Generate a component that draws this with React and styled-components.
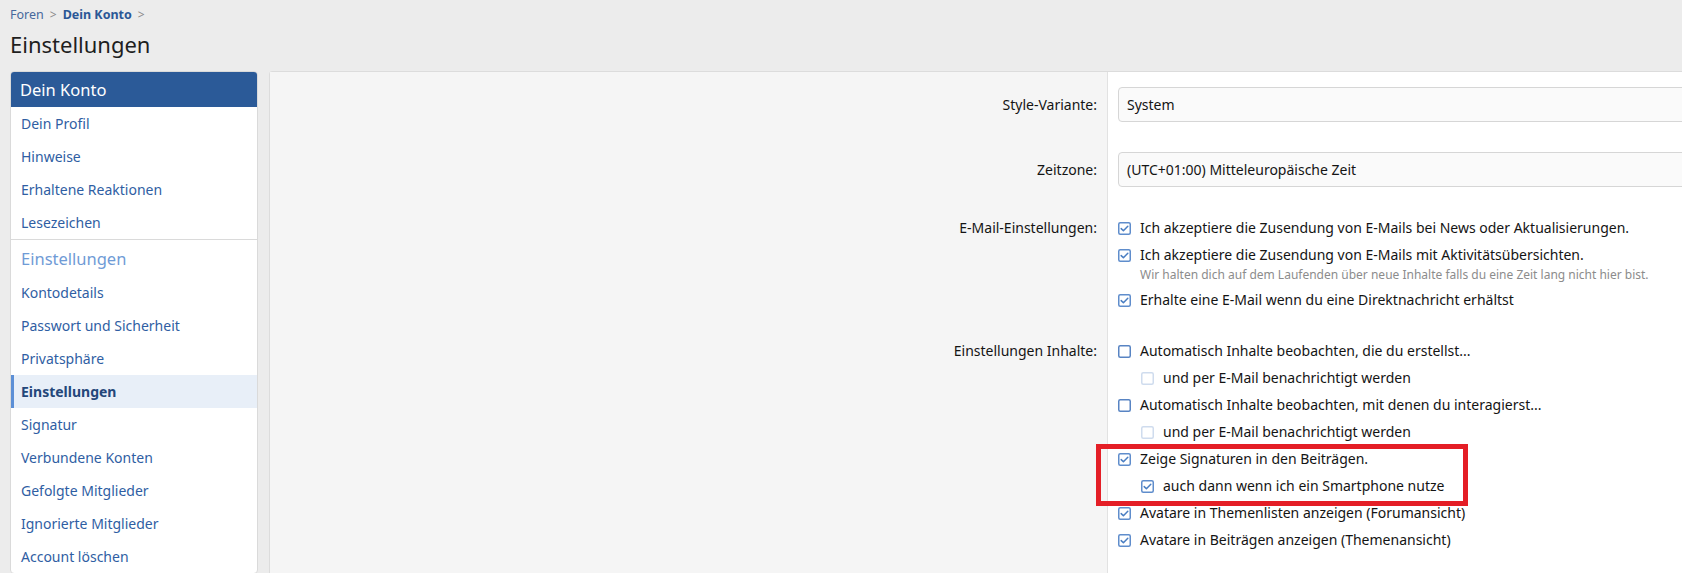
import React from "react";
import styled, { createGlobalStyle } from "styled-components";

const FONT = `"Noto Sans", "Open Sans", Arial, sans-serif`;

const GlobalStyle = createGlobalStyle`
  html, body { margin: 0; padding: 0; overflow: hidden; }
  body {
    background: #ececec;
    font-family: ${FONT};
    color: #141414;
  }
  *, *::before, *::after { box-sizing: border-box; }
`;

const Page = styled.div`
  width: 1900px;
  padding: 0 10px;
`;

const Breadcrumb = styled.nav`
  display: flex;
  align-items: center;
  gap: 6px;
  height: 26px;
  padding-top: 2px;
  font-size: 12.5px;
`;

const Crumb = styled.a`
  color: ${(p) => (p.$current ? "#2b5796" : "#47689c")};
  font-weight: ${(p) => (p.$current ? 700 : 400)};
  text-decoration: none;
`;

const Sep = styled.span`
  color: #8a8a8a;
  font-size: 12px;
`;

const Title = styled.h1`
  margin: 0;
  height: 45px;
  line-height: 36px;
  font-size: 22px;
  font-weight: 400;
  color: #1e1e1e;
`;

const Columns = styled.div`
  display: flex;
  align-items: flex-start;
  gap: 11px;
`;

const Sidebar = styled.aside`
  width: 248px;
  flex: none;
  background: #fff;
  border: 1px solid #dadada;
  border-radius: 4px;
  overflow: hidden;
`;

const SideHeader = styled.div`
  height: 36px;
  padding: 0 10px;
  display: flex;
  align-items: center;
  background: #2b5a98;
  color: #fff;
  font-size: 16.5px;
  margin: -1px -1px 0;
`;

const SideSection = styled.div`
  & + & {
    border-top: 1px solid #dadada;
  }
`;

const SideSubHeader = styled.div`
  height: 36px;
  padding: 0 10px;
  display: flex;
  align-items: center;
  color: #6f9bd6;
  font-size: 16.5px;
`;

const SideItem = styled.a`
  display: flex;
  align-items: center;
  height: 33px;
  padding: 0 10px 0 ${(p) => (p.$active ? "7px" : "10px")};
  border-left: ${(p) => (p.$active ? "3px solid #5c8fd6" : "0")};
  background: ${(p) => (p.$active ? "#e8eff8" : "transparent")};
  color: ${(p) => (p.$active ? "#24477a" : "#2f5ea3")};
  font-weight: ${(p) => (p.$active ? 700 : 400)};
  font-size: 14px;
  text-decoration: none;
`;

const Main = styled.main`
  flex: 1;
  background: #fff;
  border: 1px solid #dcdcdc;
  border-radius: 3px;
  display: grid;
  grid-template-columns: 837px 1fr;
  grid-template-rows: auto auto auto 1fr;
  min-height: 520px;
`;

const Label = styled.div`
  background: #f5f5f5;
  text-align: right;
  padding: ${(p) => (p.$input ? "22px" : "15px")} 10px 15px;
  font-size: 14px;
  line-height: 21px;
  color: #141414;
`;

const Field = styled.div`
  border-left: 1px solid #e2e2e2;
  padding: 15px 10px;
`;

const Input = styled.div`
  height: 35px;
  display: flex;
  align-items: center;
  padding: 0 8px;
  background: #fafafa;
  border: 1px solid #d6d6d6;
  border-radius: 4px;
  font-size: 14px;
  color: #141414;
`;

const CheckList = styled.ul`
  list-style: none;
  margin: 0;
  padding: 0;
  display: flex;
  flex-direction: column;
  gap: 6px;
`;

const CheckItem = styled.li`
  margin-left: ${(p) => (p.$nested ? "23px" : "0")};
`;

const CheckLine = styled.label`
  display: flex;
  align-items: flex-start;
  gap: 9px;
  font-size: 14px;
  line-height: 21px;
  color: #141414;
`;

const BoxWrap = styled.span`
  flex: none;
  display: flex;
  margin-top: 5px;
`;

const Hint = styled.div`
  margin-left: 22px;
  margin-top: 1px;
  font-size: 12px;
  line-height: 17px;
  color: #8c8c8c;
`;

const Highlight = styled.li`
  position: relative;
  display: flex;
  flex-direction: column;
  gap: 6px;
  &::after {
    content: "";
    position: absolute;
    left: -22px;
    top: -4px;
    width: 372px;
    height: 62px;
    border: 5px solid #e41e26;
    pointer-events: none;
  }
`;

function Box({ checked, disabled }) {
  const stroke = disabled ? "#cfdcee" : checked ? "#5f8dcc" : "#5884c3";
  return (
    <BoxWrap>
      <svg width="13" height="13" viewBox="0 0 13 13">
        <rect x="0.75" y="0.75" width="11.5" height="11.5" rx="1.5" fill="#fff" stroke={stroke} strokeWidth="1.5" />
        {checked && (
          <path d="M3.2 6.6 L5.4 8.8 L9.8 4.2" fill="none" stroke="#4a7ec2" strokeWidth="1.5" strokeLinecap="round" strokeLinejoin="round" />
        )}
      </svg>
    </BoxWrap>
  );
}

function Check({ checked, disabled, nested, children, hint }) {
  return (
    <CheckItem $nested={nested}>
      <CheckLine>
        <Box checked={checked} disabled={disabled} />
        <span>{children}</span>
      </CheckLine>
      {hint && <Hint>{hint}</Hint>}
    </CheckItem>
  );
}

const accountLinks = ["Dein Profil", "Hinweise", "Erhaltene Reaktionen", "Lesezeichen"];
const settingsLinks = [
  "Kontodetails",
  "Passwort und Sicherheit",
  "Privatsphäre",
  "Einstellungen",
  "Signatur",
  "Verbundene Konten",
  "Gefolgte Mitglieder",
  "Ignorierte Mitglieder",
  "Account löschen",
];

export default function App() {
  return (
    <>
      <GlobalStyle />
      <Page>
        <Breadcrumb>
          <Crumb>Foren</Crumb>
          <Sep>&gt;</Sep>
          <Crumb $current>Dein Konto</Crumb>
          <Sep>&gt;</Sep>
        </Breadcrumb>
        <Title>Einstellungen</Title>
        <Columns>
          <Sidebar>
            <SideHeader>Dein Konto</SideHeader>
            <SideSection>
              {accountLinks.map((l) => (
                <SideItem key={l}>{l}</SideItem>
              ))}
            </SideSection>
            <SideSection>
              <SideSubHeader>Einstellungen</SideSubHeader>
              {settingsLinks.map((l) => (
                <SideItem key={l} $active={l === "Einstellungen"}>
                  {l}
                </SideItem>
              ))}
            </SideSection>
          </Sidebar>
          <Main>
            <Label $input>Style-Variante:</Label>
            <Field>
              <Input>System</Input>
            </Field>

            <Label $input>Zeitzone:</Label>
            <Field>
              <Input>(UTC+01:00) Mitteleuropäische Zeit</Input>
            </Field>

            <Label>E-Mail-Einstellungen:</Label>
            <Field>
              <CheckList>
                <Check checked>Ich akzeptiere die Zusendung von E-Mails bei News oder Aktualisierungen.</Check>
                <Check checked hint="Wir halten dich auf dem Laufenden über neue Inhalte falls du eine Zeit lang nicht hier bist.">
                  Ich akzeptiere die Zusendung von E-Mails mit Aktivitätsübersichten.
                </Check>
                <Check checked>Erhalte eine E-Mail wenn du eine Direktnachricht erhältst</Check>
              </CheckList>
            </Field>

            <Label>Einstellungen Inhalte:</Label>
            <Field>
              <CheckList>
                <Check>Automatisch Inhalte beobachten, die du erstellst...</Check>
                <Check nested disabled>und per E-Mail benachrichtigt werden</Check>
                <Check>Automatisch Inhalte beobachten, mit denen du interagierst...</Check>
                <Check nested disabled>und per E-Mail benachrichtigt werden</Check>
                <Highlight>
                  <CheckLine>
                    <Box checked />
                    <span>Zeige Signaturen in den Beiträgen.</span>
                  </CheckLine>
                  <CheckItem as="div" $nested>
                    <CheckLine>
                      <Box checked />
                      <span>auch dann wenn ich ein Smartphone nutze</span>
                    </CheckLine>
                  </CheckItem>
                </Highlight>
                <Check checked>Avatare in Themenlisten anzeigen (Forumansicht)</Check>
                <Check checked>Avatare in Beiträgen anzeigen (Themenansicht)</Check>
              </CheckList>
            </Field>
          </Main>
        </Columns>
      </Page>
    </>
  );
}
